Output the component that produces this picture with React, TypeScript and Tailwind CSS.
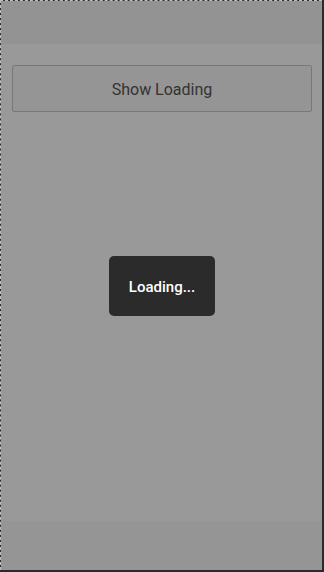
const App = () => {
  return (
    <div
      className="relative h-[572px] w-[324px] bg-[#2a2a2a]"
      style={{ fontFamily: "Roboto, 'Noto Sans', sans-serif" }}
    >
      <div className="flex h-[570px] w-[322px] flex-col overflow-hidden border-t border-l border-dashed border-t-[#bdbdbd] border-l-[#bdbdbd] bg-[#999999] bg-clip-padding">
        <div className="h-[43px] shrink-0 bg-[#939393]" />
        <div className="flex flex-1 flex-col pt-[21px] pr-[10px] pl-[11px]">
          <button
            type="button"
            className="flex h-[47px] w-full items-center justify-center rounded-[2px] border border-[#787878] bg-[#959595] pt-[2px] text-[16px] text-[#333333]"
          >
            Show Loading
          </button>
        </div>
        <div className="h-[49px] shrink-0 bg-[#959595]" />
      </div>
      <div className="absolute left-[109px] top-[256px] flex h-[60px] w-[106px] items-center justify-center rounded-[5px] bg-[#2b2b2b] pt-[3px] text-[15px] font-medium text-white">
        Loading...
      </div>
    </div>
  );
};

export default App;
